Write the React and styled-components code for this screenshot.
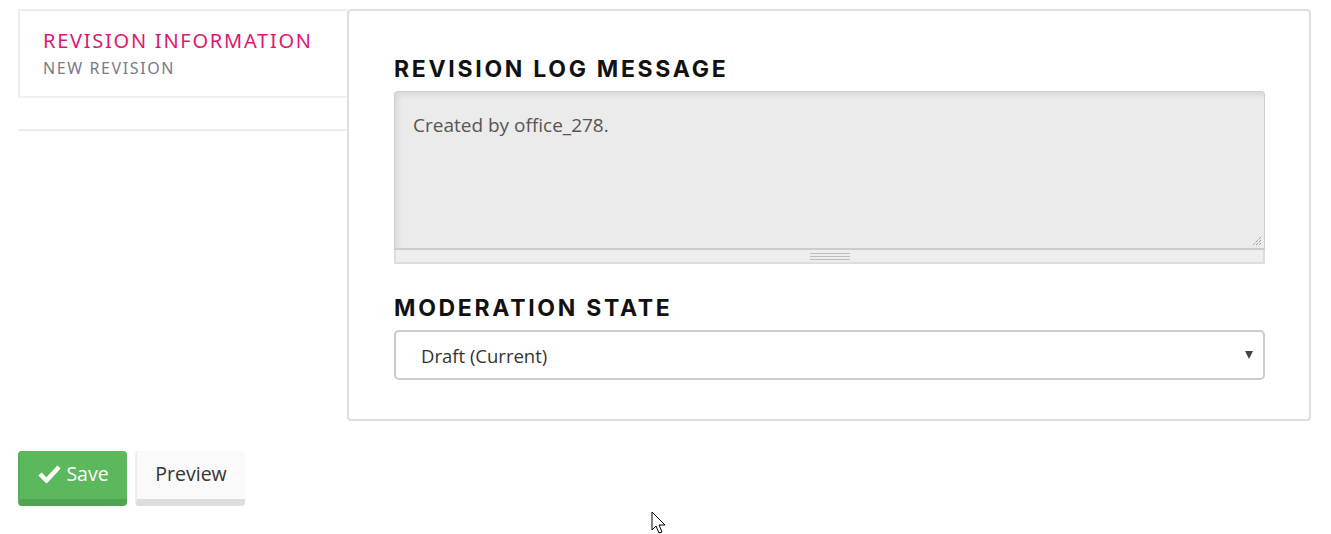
import React from 'react'
import styled, { createGlobalStyle } from 'styled-components'

const GlobalStyle = createGlobalStyle`
  html, body {
    margin: 0;
    padding: 0;
    background: #fff;
  }
  body {
    font-family: "Open Sans", "Liberation Sans", sans-serif;
    color: #333;
  }
`

const Page = styled.div`
  position: relative;
  width: 1331px;
  height: 534px;
  padding: 9px 20px 0 18px;
  box-sizing: border-box;
`

const Tabs = styled.div`
  display: flex;
  align-items: flex-start;
`

const TabMenu = styled.ul`
  width: 329px;
  flex-shrink: 0;
  margin: 0;
  padding: 0 0 31px;
  list-style: none;
  border-bottom: 2px solid #ececec;
`

const TabItem = styled.li`
  height: 89px;
  box-sizing: border-box;
  padding: 18px 0 0 23px;
  background: #fff;
  border-left: 2px solid #ececec;
  border-top: 2px solid #ececec;
  border-bottom: 2px solid #f0f0f0;
`

const TabTitle = styled.div`
  font-family: "Noto Sans", "Open Sans", sans-serif;
  font-size: 20px;
  line-height: 24px;
  letter-spacing: 1.75px;
  color: #e0176f;
`

const TabSummary = styled.div`
  margin-top: 5px;
  font-family: "Noto Sans", "Open Sans", sans-serif;
  font-size: 16px;
  line-height: 20px;
  letter-spacing: 1.6px;
  color: #777a8a;
`

const Panel = styled.div`
  flex: 1;
  height: 412px;
  box-sizing: border-box;
  padding: 48px 44px 0 45px;
  border: 2px solid #dedede;
  border-radius: 4px;
  background: #fff;
`

const Label = styled.h3`
  margin: 0 0 12px;
  font-family: Inter, "Liberation Sans", sans-serif;
  font-weight: 700;
  font-size: 23px;
  line-height: 20px;
  letter-spacing: 2.7px;
  color: #111;
`

const TextArea = styled.div`
  height: 159px;
  box-sizing: border-box;
  padding: 21px 18px;
  background: #ebebeb;
  border: 1px solid #cfcfcf;
  border-bottom: 2px solid #cccccc;
  border-radius: 4px 4px 0 0;
  box-shadow: inset 3px 3px 5px rgba(0, 0, 0, 0.08);
  font-size: 19px;
  line-height: 24px;
  color: #555;
  position: relative;
`

const Resize = styled.svg`
  position: absolute;
  right: 2px;
  bottom: 2px;
`

const Grippie = styled.div`
  height: 12px;
  display: flex;
  align-items: center;
  justify-content: center;
  background: #eeeeee;
  border: 2px solid #dddddd;
  border-top: none;
  margin-bottom: 34px;
`

const GripLines = styled.div`
  width: 40px;
  height: 7px;
  border-top: 1px solid #bdbdbd;
  border-bottom: 1px solid #bdbdbd;
  position: relative;
  box-sizing: border-box;
  &::after {
    content: "";
    position: absolute;
    left: 0;
    right: 0;
    top: 2px;
    border-top: 1px solid #bdbdbd;
  }
`

const Select = styled.div`
  height: 50px;
  box-sizing: border-box;
  display: flex;
  align-items: center;
  justify-content: space-between;
  margin-top: 2px;
  padding: 0 10px 0 25px;
  border: 2px solid #cccccc;
  border-radius: 5px;
  font-size: 18.5px;
  color: #333;
`

const Caret = styled.span`
  width: 0;
  height: 0;
  border-left: 4px solid transparent;
  border-right: 4px solid transparent;
  border-top: 8px solid #444;
`

const Actions = styled.div`
  display: flex;
  gap: 8px;
  margin-top: 30px;
`

const Button = styled.button`
  height: 55px;
  box-sizing: border-box;
  display: flex;
  align-items: center;
  justify-content: center;
  gap: 5px;
  padding: 0 0 4px;
  font-family: "Open Sans", "Liberation Sans", sans-serif;
  font-size: 19.5px;
  border: none;
  border-radius: 4px;
  width: ${p => p.$width}px;
  color: ${p => (p.$primary ? '#fff' : '#333')};
  background: ${p => (p.$primary ? '#5cb85c' : '#fafafa')};
  border-bottom: 7px solid ${p => (p.$primary ? '#50a350' : '#dddddd')};
  border-left: 2px solid ${p => (p.$primary ? '#55ad55' : '#ececec')};
`

const Cursor = styled.svg`
  position: absolute;
  left: 651px;
  top: 511px;
`

function App() {
  return (
    <Page>
      <GlobalStyle />
      <Tabs>
        <TabMenu>
          <TabItem>
            <TabTitle>REVISION INFORMATION</TabTitle>
            <TabSummary>NEW REVISION</TabSummary>
          </TabItem>
        </TabMenu>
        <Panel>
          <Label>REVISION LOG MESSAGE</Label>
          <TextArea>
            Created by office_278.
            <Resize width="10" height="10" viewBox="0 0 10 10">
              <path d="M9 1 L1 9 M9 4 L4 9 M9 7 L7 9" stroke="#777" strokeWidth="1" strokeDasharray="1 1" />
            </Resize>
          </TextArea>
          <Grippie>
            <GripLines />
          </Grippie>
          <Label>MODERATION STATE</Label>
          <Select>
            <span>Draft (Current)</span>
            <Caret />
          </Select>
        </Panel>
      </Tabs>
      <Actions>
        <Button $primary $width={109}>
          <svg width="23" height="19" viewBox="0 0 23 19">
            <path d="M2 10 L8.5 16.5 L21 3" fill="none" stroke="#fff" strokeWidth="4.5" strokeLinejoin="miter" />
          </svg>
          Save
        </Button>
        <Button $width={110}>Preview</Button>
      </Actions>
      <Cursor width="20" height="24" viewBox="0 0 20 24">
        <path d="M1 1 L1 19 L5 15 L8 22 L11 21 L8 14 L14 14 Z" fill="#fff" stroke="#000" strokeWidth="1" />
      </Cursor>
    </Page>
  )
}

export default App
